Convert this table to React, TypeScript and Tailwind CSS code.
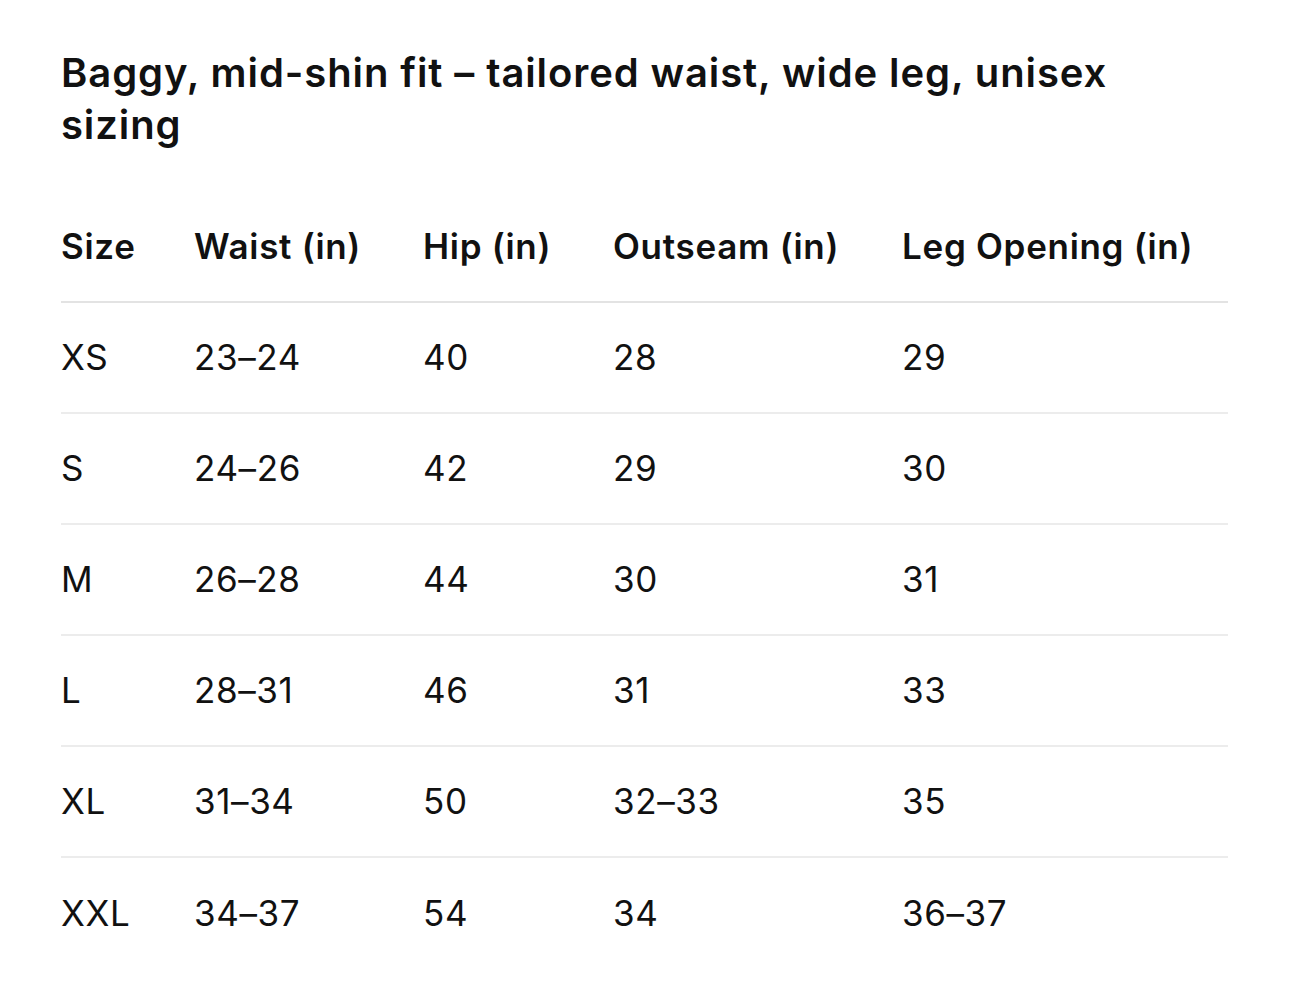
import React from "react";

const headers = ["Size", "Waist (in)", "Hip (in)", "Outseam (in)", "Leg Opening (in)"];
const rows = [
  ["XS", "23–24", "40", "28", "29"],
  ["S", "24–26", "42", "29", "30"],
  ["M", "26–28", "44", "30", "31"],
  ["L", "28–31", "46", "31", "33"],
  ["XL", "31–34", "50", "32–33", "35"],
  ["XXL", "34–37", "54", "34", "36–37"],
];

export default function App() {
  return (
    <div
      className="w-[1290px] h-[998px] bg-white text-[#111111] overflow-hidden"
      style={{ fontFamily: "Inter, 'Noto Sans', sans-serif" }}
    >
      <div className="pl-[61px] pr-[62px] pt-[47px]">
        <h1 className="text-[40px] font-semibold leading-[52px] max-w-[1120px] tracking-[0.9px]">
          Baggy, mid-shin fit – tailored waist, wide leg, unisex sizing
        </h1>
        <div className="mt-[41px]">
          <div className="grid grid-cols-[133px_229px_190px_289px_1fr] h-[111px] items-center border-b-2 border-[#e3e3e3]">
            {headers.map((h) => (
              <div key={h} className="text-[35px] font-semibold tracking-[0.7px]">
                {h}
              </div>
            ))}
          </div>
          {rows.map((r, i) => (
            <div
              key={i}
              className={`grid grid-cols-[133px_229px_190px_289px_1fr] h-[111px] items-center ${
                i < rows.length - 1 ? "border-b-2 border-[#ececec]" : ""
              }`}
            >
              {r.map((c, j) => (
                <div key={j} className="text-[35px] font-normal tracking-[0.6px]">
                  {c}
                </div>
              ))}
            </div>
          ))}
        </div>
      </div>
    </div>
  );
}
